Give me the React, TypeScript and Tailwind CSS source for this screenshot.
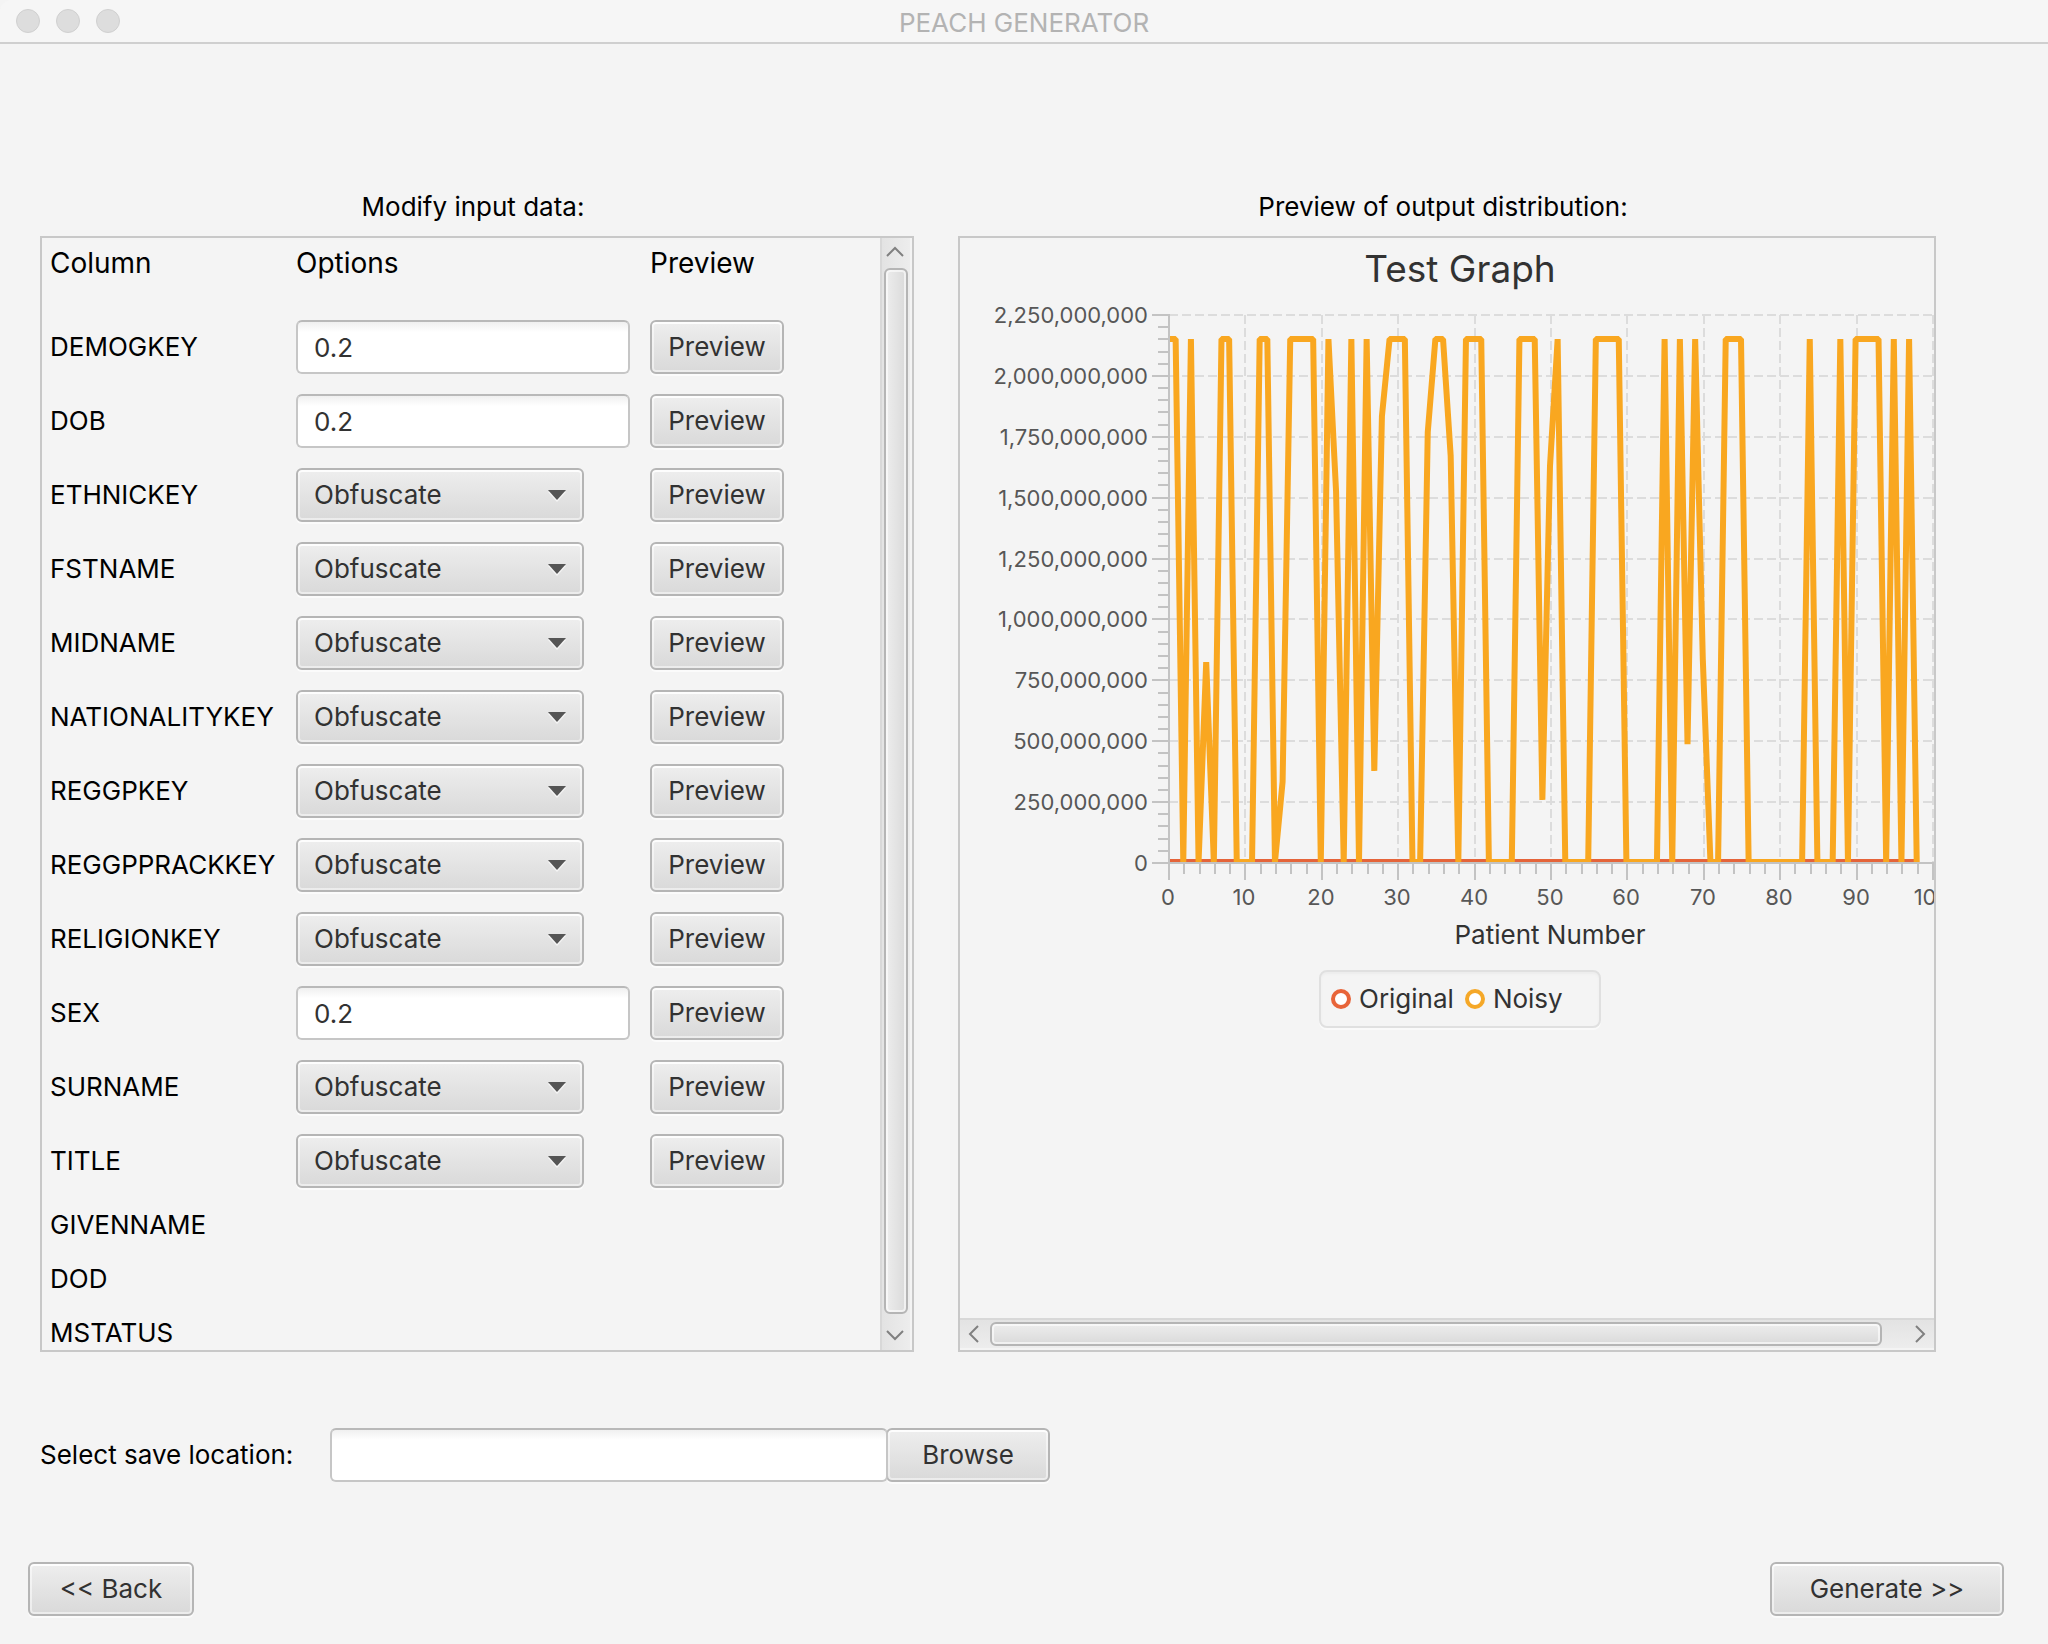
import React from "react";

type Field = { name: string; kind: "number" | "choice" | "none" };

const FIELDS: Field[] = [
  { name: "DEMOGKEY", kind: "number" },
  { name: "DOB", kind: "number" },
  { name: "ETHNICKEY", kind: "choice" },
  { name: "FSTNAME", kind: "choice" },
  { name: "MIDNAME", kind: "choice" },
  { name: "NATIONALITYKEY", kind: "choice" },
  { name: "REGGPKEY", kind: "choice" },
  { name: "REGGPPRACKKEY", kind: "choice" },
  { name: "RELIGIONKEY", kind: "choice" },
  { name: "SEX", kind: "number" },
  { name: "SURNAME", kind: "choice" },
  { name: "TITLE", kind: "choice" },
  { name: "GIVENNAME", kind: "none" },
  { name: "DOD", kind: "none" },
  { name: "MSTATUS", kind: "none" },
];

const BUTTON =
  "h-[54px] rounded-md border-2 border-[#b5b5b5] bg-linear-to-b from-[#eeeeee] to-[#d9d9d9] text-center text-[#323232] shadow-[0_2px_0_#fbfbfb,inset_0_2px_0_#fdfdfd,inset_0_0_0_2px_#ffffff80]";
const TEXT_BOX =
  "h-[54px] rounded-md border-2 border-[#c6c6c6] border-t-[#b9b9b9] bg-white bg-linear-to-b from-[#f0f0f0] to-white to-20% px-4 text-[#323232]";

/* Chart geometry, in the drawing's own units */
const LEFT = 209;
const TOP = 15;
const WIDTH = 764;
const HEIGHT = 548;
const MAX = 2250;
const CAP = 2147;

/* Values of the noisy series in millions; patients left out are at zero */
const NOISY: Record<number, number> = {
  0: CAP, 1: CAP, 3: CAP, 5: 821, 7: CAP, 8: CAP, 12: CAP, 13: CAP, 15: 330,
  16: CAP, 17: CAP, 18: CAP, 19: CAP, 21: CAP, 22: 1520, 24: CAP, 26: CAP,
  27: 374, 28: 1830, 29: CAP, 30: CAP, 31: CAP, 34: 1765, 35: CAP, 36: CAP,
  37: 1667, 39: CAP, 40: CAP, 41: CAP, 46: CAP, 47: CAP, 48: CAP, 49: 255,
  50: 1626, 51: CAP, 56: CAP, 57: CAP, 58: CAP, 59: CAP, 65: CAP, 67: CAP,
  68: 484, 69: CAP, 70: 833, 73: CAP, 74: CAP, 75: CAP, 84: CAP, 88: CAP,
  90: CAP, 91: CAP, 92: CAP, 93: CAP, 95: CAP, 97: CAP,
};

const px = (n: number) => LEFT + (n * WIDTH) / 100;
const py = (v: number) => TOP + HEIGHT - (v * HEIGHT) / MAX;
const range = (n: number) => Array.from({ length: n }, (_, i) => i);

/* The series sit on the inner edge of the axis lines */
const noisyPoints = range(99)
  .map((n) => `${px(n) - 1},${py(NOISY[n] ?? 0) - 1}`)
  .join(" ");

function Chart() {
  return (
    <svg
      width="1000"
      height="612"
      viewBox="0 0 1000 612"
      className="block"
      role="img"
      aria-label="Original and noisy values by patient number"
    >
      <defs>
        <clipPath id="plot">
          <rect x={LEFT + 1} y={TOP - 1} width={WIDTH} height={HEIGHT} />
        </clipPath>
      </defs>
      <g stroke="#dcdcdc" strokeWidth="2" strokeDasharray="9 4" fill="none">
        {range(10).map((i) => (
          <path key={i} d={`M${Math.round(px((i + 1) * 10))} ${TOP}V${TOP + HEIGHT}`} />
        ))}
        {range(9).map((i) => (
          <path key={i} d={`M${LEFT} ${Math.round(py((i + 1) * 250))}H${LEFT + WIDTH}`} />
        ))}
      </g>
      <g stroke="#c3c3c3" strokeWidth="2">
        <path d={`M${LEFT} ${TOP - 1}V${TOP + HEIGHT + 17}`} />
        <path d={`M${LEFT} ${TOP + HEIGHT}H${LEFT + WIDTH + 1}`} />
        {range(46).map((i) => (
          <path key={i} d={`M${LEFT - (i % 5 ? 11 : 17)} ${Math.round(py(i * 50))}H${LEFT}`} />
        ))}
        {range(51).map((i) => (
          <path
            key={i}
            d={`M${Math.round(px(i * 2))} ${TOP + HEIGHT}V${TOP + HEIGHT + (i % 5 ? 11 : 17)}`}
          />
        ))}
      </g>
      <g clipPath="url(#plot)" fill="none" strokeWidth="6" strokeLinejoin="bevel">
        <path d={`M${px(0)} ${py(0) - 1}H${px(98)}`} stroke="#e5643a" />
        <polyline points={noisyPoints} stroke="#f9a720" strokeLinecap="square" />
      </g>
      <g className="text-[22px]" fill="#575757">
        {range(10).map((i) => (
          <text key={i} x="188" y={Math.round(py(i * 250)) + 8} textAnchor="end">
            {(i * 250000000).toLocaleString("en-US")}
          </text>
        ))}
        {range(11).map((i) => (
          <text key={i} x={Math.round(px(i * 10)) - 1} y="605" textAnchor="middle">
            {i * 10}
          </text>
        ))}
      </g>
    </svg>
  );
}

function Chevron({ d }: { d: string }) {
  return (
    <svg width="20" height="20" viewBox="0 0 20 20" fill="none" stroke="#808080" strokeWidth="2">
      <path d={d} />
    </svg>
  );
}

function FieldRow({ field }: { field: Field }) {
  const id = `option-${field.name}`;
  if (field.kind === "none") {
    return (
      <tr className="h-[54px]">
        <th scope="row" className="pl-2 text-left font-normal">{field.name}</th>
        <td />
        <td />
      </tr>
    );
  }
  return (
    <tr className="h-[74px]">
      <th scope="row" className="pl-2 text-left font-normal">
        <label htmlFor={id}>{field.name}</label>
      </th>
      <td>
        {field.kind === "number" ? (
          <input id={id} type="text" defaultValue="0.2" className={`${TEXT_BOX} block w-[334px]`} />
        ) : (
          <div className="relative w-72">
            <select id={id} className={`${BUTTON} block w-full appearance-none pl-4 text-left`}>
              <option>Obfuscate</option>
            </select>
            <svg
              width="18"
              height="12"
              viewBox="0 0 18 12"
              className="pointer-events-none absolute top-[22px] right-[18px]"
            >
              <path d="M0 2h18l-9 10z" fill="#f5f5f5" />
              <path d="M0 0h18l-9 10z" fill="#555555" />
            </svg>
          </div>
        )}
      </td>
      <td>
        <button type="button" className={`${BUTTON} block w-[134px]`}>Preview</button>
      </td>
    </tr>
  );
}

function FieldPane() {
  return (
    <div className="flex min-h-0 flex-1 border-2 border-[#c8c8c8]">
      <div className="min-w-0 flex-1 overflow-hidden">
        <table className="w-full table-fixed border-collapse">
          <colgroup>
            <col className="w-[254px]" />
            <col className="w-[354px]" />
            <col />
          </colgroup>
          <thead>
            <tr className="h-[72px] text-left align-top text-[28px]">
              <th scope="col" className="pt-2 pl-2 font-normal">Column</th>
              <th scope="col" className="pt-2 font-normal">Options</th>
              <th scope="col" className="pt-2 font-normal">Preview</th>
            </tr>
          </thead>
          <tbody>
            {FIELDS.map((f) => (
              <FieldRow key={f.name} field={f} />
            ))}
          </tbody>
        </table>
      </div>
      <div className="mr-0.5 flex w-[30px] flex-col items-center border-l-2 border-[#d8d8d8] bg-linear-to-r from-[#e3e3e3] to-[#ededed]">
        <button type="button" aria-label="Scroll up" className="flex h-[30px] items-center">
          <Chevron d="M1 13l8-8l8 8" />
        </button>
        <div className="w-6 flex-1 rounded-md border-2 border-[#b5b5b5] bg-linear-to-r from-[#ededed] to-[#dadada] shadow-[inset_0_0_0_2px_#ffffff99]" />
        <button type="button" aria-label="Scroll down" className="flex h-9 items-center">
          <Chevron d="M1 9l8 8l8-8" />
        </button>
      </div>
    </div>
  );
}

function LegendItem({ label, color }: { label: string; color: string }) {
  return (
    <span className="flex items-center gap-2">
      <svg width="20" height="20" viewBox="0 0 20 20">
        <circle cx="10" cy="10" r="8" fill="white" stroke={color} strokeWidth="4" />
      </svg>
      {label}
    </span>
  );
}

function ChartPane() {
  return (
    <div className="flex min-h-0 flex-1 flex-col border-2 border-[#c8c8c8]">
      <div className="min-h-0 flex-1 overflow-hidden text-[#323232]">
        <div className="flex w-[1000px] flex-col items-center">
          <h2 className="pt-1 pb-1 text-[37px] leading-[54px]">Test Graph</h2>
          <Chart />
          <p className="ml-[180px] pt-[6px]">Patient Number</p>
          <div className="mt-[18px] flex h-[58px] w-[282px] items-center gap-[11px] rounded-lg border-2 border-[#e0e0e0] pl-[10px] shadow-[0_2px_0_#fafafa,inset_0_2px_2px_#ededed]">
            <LegendItem label="Original" color="#e8653a" />
            <LegendItem label="Noisy" color="#f5a828" />
          </div>
        </div>
      </div>
      <div className="mb-0.5 flex h-[30px] items-center border-t-2 border-[#d8d8d8] bg-linear-to-b from-[#e3e3e3] to-[#ededed]">
        <button type="button" aria-label="Scroll left" className="flex w-[30px] justify-center">
          <Chevron d="M13 2l-8 8l8 8" />
        </button>
        <div className="h-6 flex-1 rounded-md border-2 border-[#b5b5b5] bg-linear-to-b from-[#ededed] to-[#dadada] shadow-[inset_0_0_0_2px_#ffffff99]" />
        <button type="button" aria-label="Scroll right" className="flex w-[52px] justify-end pr-1">
          <Chevron d="M6 2l8 8l-8 8" />
        </button>
      </div>
    </div>
  );
}

export default function App() {
  return (
    <div className="flex h-screen flex-col bg-[#f4f4f4] font-['Inter',sans-serif] text-[26px] leading-[34px] text-black">
      <header className="relative flex h-11 shrink-0 items-center justify-center rounded-tl-xl border-b-2 border-[#cfcfcf] bg-[#f6f6f6]">
        <div className="absolute left-4 flex gap-4">
          <span className="size-6 rounded-full border border-[#d0d0d0] bg-[#dddddd]" />
          <span className="size-6 rounded-full border border-[#d0d0d0] bg-[#dddddd]" />
          <span className="size-6 rounded-full border border-[#d0d0d0] bg-[#dddddd]" />
        </div>
        <h1 className="pt-1 text-[#b3b3b3]">PEACH GENERATOR</h1>
      </header>

      <main className="flex min-h-0 flex-1 flex-col pt-[146px]">
        <div className="grid min-h-0 flex-1 grid-cols-[874fr_978fr] gap-11 pr-28 pl-10">
          <section className="flex min-h-0 flex-col">
            <h2 className="pr-2 pb-3 text-center">Modify input data:</h2>
            <FieldPane />
          </section>
          <section className="flex min-h-0 min-w-0 flex-col">
            <h2 className="pr-2 pb-3 text-center">Preview of output distribution:</h2>
            <ChartPane />
          </section>
        </div>

        <div className="mt-[76px] flex items-center pl-10">
          <label htmlFor="save" className="w-[290px]">Select save location:</label>
          <input id="save" type="text" className={`${TEXT_BOX} relative z-10 w-[558px]`} />
          <button type="button" className={`${BUTTON} -ml-0.5 w-[164px]`}>Browse</button>
        </div>

        <div className="mt-20 mb-7 flex justify-between pr-11 pl-7">
          <button type="button" className={`${BUTTON} w-[166px]`}>&lt;&lt; Back</button>
          <button type="button" className={`${BUTTON} w-[234px]`}>Generate &gt;&gt;</button>
        </div>
      </main>
    </div>
  );
}
